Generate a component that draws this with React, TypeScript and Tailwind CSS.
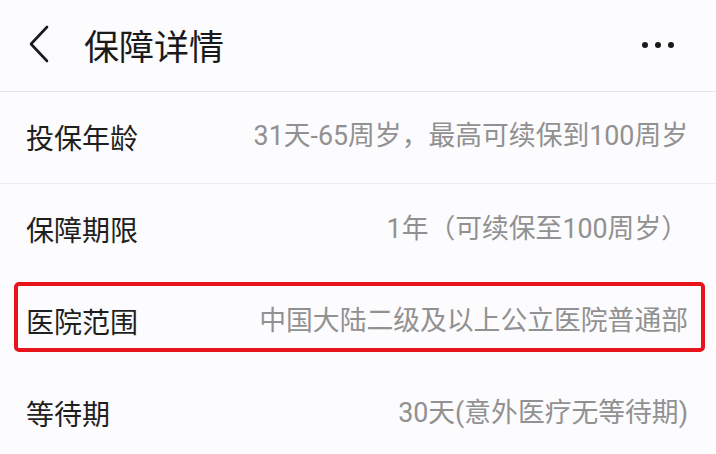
const rows = [
  { label: "投保年龄", value: "31天-65周岁，最高可续保到100周岁" },
  { label: "保障期限", value: "1年（可续保至100周岁）" },
  { label: "医院范围", value: "中国大陆二级及以上公立医院普通部", marked: true },
  { label: "等待期", value: "30天(意外医疗无等待期)" },
];

export default function App() {
  return (
    <div
      className="h-[454px] w-[716px] overflow-hidden bg-[#fcfbfd]"
      style={{ fontFamily: '"Noto Sans CJK SC", "Noto Sans", sans-serif' }}
    >
      <header className="flex h-[92px] items-center border-b border-[#e6e6e8] pl-[28px] pr-[42px]">
        <svg width="22" height="38" viewBox="0 0 22 38" className="-mt-[3px] mr-[34px]">
          <path d="M19 2 L3 19 L19 36" fill="none" stroke="#1a1a1a" strokeWidth="2.6" strokeLinecap="round" strokeLinejoin="round" />
        </svg>
        <h1 className="-mt-[3px] text-[35px] leading-none text-[#1a1a1a]">保障详情</h1>
        <div className="ml-auto -mt-[2px] flex gap-[7px]">
          <span className="h-[6px] w-[6px] rounded-full bg-[#1a1a1a]" />
          <span className="h-[6px] w-[6px] rounded-full bg-[#1a1a1a]" />
          <span className="h-[6px] w-[6px] rounded-full bg-[#1a1a1a]" />
        </div>
      </header>
      {rows.map((r, i) => (
        <div
          key={r.label}
          className={`relative flex h-[92px] items-center justify-between pl-[26px] pr-[28px] ${i === 0 ? "border-b border-[#ececee]" : ""}`}
        >
          <span className="-mt-[2px] text-[28px] leading-none text-[#1f1f1f]">{r.label}</span>
          <span
            className="-mt-[2px] text-[26.8px] leading-none text-[#919191]"
            style={{ fontFamily: 'Roboto, "Noto Sans CJK SC", sans-serif' }}
          >
            {r.value}
          </span>
          {r.marked && (
            <div className="absolute left-[14px] right-[11px] top-[6px] bottom-[16px] rounded-[5px] border-[4px] border-[#e8141b]" />
          )}
        </div>
      ))}
    </div>
  );
}
